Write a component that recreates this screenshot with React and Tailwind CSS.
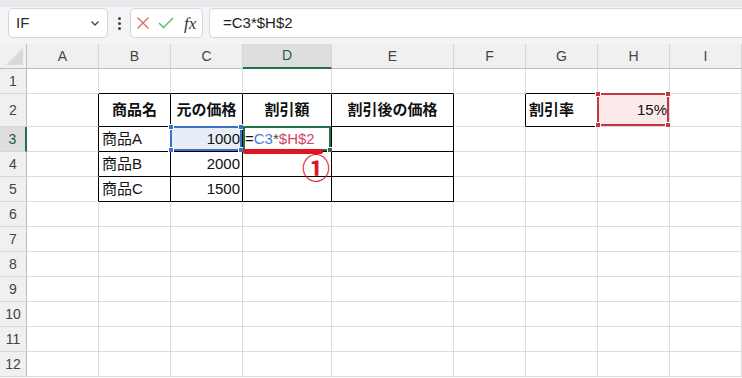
import React from "react";

const cols = ["A", "B", "C", "D", "E", "F", "G", "H", "I"];
const rows = [1, 2, 3, 4, 5, 6, 7, 8, 9, 10, 11, 12];

const cells = {
  B2: { text: "商品名", bold: true, align: "center" },
  C2: { text: "元の価格", bold: true, align: "center" },
  D2: { text: "割引額", bold: true, align: "center" },
  E2: { text: "割引後の価格", bold: true, align: "center" },
  G2: { text: "割引率", bold: true, align: "left" },
  H2: { text: "15%", align: "right" },
  B3: { text: "商品A", align: "left" },
  C3: { text: "1000", align: "right" },
  B4: { text: "商品B", align: "left" },
  C4: { text: "2000", align: "right" },
  B5: { text: "商品C", align: "left" },
  C5: { text: "1500", align: "right" },
};

const inTable = (c) => ["B", "C", "D", "E"].includes(c);

const rightBlack = (r, c) =>
  (r >= 2 && r <= 5 && ["A", "B", "C", "D", "E"].includes(c)) ||
  (r === 2 && (c === "F" || c === "G"));

const bottomBlack = (r, c) =>
  (r >= 1 && r <= 5 && inTable(c)) || (c === "G" && (r === 1 || r === 2));

const alignClass = (cell) => {
  if (!cell) return "";
  if (cell.align === "center") return "justify-center";
  if (cell.align === "right") return "justify-end pr-[2px]";
  return "justify-start pl-[3px]";
};

// selection handles sit on the corners of a selection frame
const Handle = ({ className }) => (
  <div className={`absolute w-[6px] h-[6px] border border-white ${className}`} />
);

const Toolbar = () => (
  <div className="h-[44px] bg-[#f3f4f6] flex flex-col">
    <div className="h-[7px] bg-[#e8eaed]" />
    <div className="flex items-center h-[30px] mt-[1px]">
      <div className="ml-[8px] w-[100px] h-[30px] bg-white border border-[#d6d6d6] rounded-[5px] flex items-center justify-between pl-[7px] pr-[6px]">
        <span className="text-[15px] text-[#2a2a2a]">IF</span>
        <svg width="12" height="12" viewBox="0 0 12 12">
          <path d="M2.5 4.5 L6 8 L9.5 4.5" fill="none" stroke="#444" strokeWidth="1.3" />
        </svg>
      </div>
      <div className="w-[22px] flex flex-col items-center gap-[2px]">
        <span className="w-[3px] h-[3px] rounded-full bg-[#444]" />
        <span className="w-[3px] h-[3px] rounded-full bg-[#444]" />
        <span className="w-[3px] h-[3px] rounded-full bg-[#444]" />
      </div>
      <div className="w-[73px] h-[30px] bg-white border border-[#d6d6d6] rounded-[5px] flex items-center pl-[5px] gap-[8px]">
        <svg width="14" height="14" viewBox="0 0 14 14">
          <path d="M1.5 1.5 L12.5 12.5 M12.5 1.5 L1.5 12.5" stroke="#e46a6a" strokeWidth="1.4" fill="none" />
        </svg>
        <svg width="16" height="14" viewBox="0 0 16 14">
          <path d="M1 7 L5.5 11.5 L15 2" stroke="#5cb85c" strokeWidth="1.4" fill="none" />
        </svg>
        <span className="text-[17px] italic text-[#333] leading-none ml-[2px]" style={{ fontFamily: '"Liberation Serif", serif' }}>
          fx
        </span>
      </div>
      <div className="ml-[6px] flex-1 h-[30px] bg-white border border-[#d6d6d6] border-r-0 rounded-l-[5px] flex items-center pl-[13px]">
        <span className="text-[15px] text-[#222]">=C3*$H$2</span>
      </div>
    </div>
  </div>
);

const Overlay = ({ id }) => {
  if (id === "C3") {
    return (
      <div className="absolute -left-[1px] -top-[1px] right-0 bottom-0 bg-[#e8eef8] border-2 border-[#3f6fc6]">
        <Handle className="bg-[#3f6fc6] -left-[4px] -top-[4px]" />
        <Handle className="bg-[#3f6fc6] -right-[4px] -top-[4px]" />
        <Handle className="bg-[#3f6fc6] -left-[4px] -bottom-[4px]" />
        <Handle className="bg-[#3f6fc6] -right-[4px] -bottom-[4px]" />
      </div>
    );
  }
  if (id === "H2") {
    return (
      <div className="absolute -left-[1px] -top-[1px] right-0 bottom-0 bg-[#fbeaea] border-2 border-[#c5373f]">
        <Handle className="bg-[#c5373f] -left-[4px] -top-[4px]" />
        <Handle className="bg-[#c5373f] -right-[4px] -top-[4px]" />
        <Handle className="bg-[#c5373f] -left-[4px] -bottom-[4px]" />
        <Handle className="bg-[#c5373f] -right-[4px] -bottom-[4px]" />
      </div>
    );
  }
  if (id === "D3") {
    return (
      <>
        <div className="absolute left-0 -top-[1px] right-0 bottom-0 border-2 border-[#217346]">
          <Handle className="bg-[#217346] -right-[4px] -bottom-[4px]" />
        </div>
        <div className="absolute left-0 -bottom-[3px] w-[80px] h-[5px] bg-[#e0161e] rounded-[2px] z-20" />
        <div className="absolute left-[59px] top-[29px] z-20 text-[28px] font-bold leading-none text-[#e0161e]">①</div>
      </>
    );
  }
  return null;
};

const Formula = () => (
  <span className="relative z-10 text-[15px] whitespace-nowrap pl-[2px]">
    <span className="text-[#111]">=</span>
    <span className="text-[#4a7bd0]">C3</span>
    <span className="text-[#444]">*</span>
    <span className="text-[#d2435e]">$H$2</span>
  </span>
);

export default function App() {
  return (
    <div
      className="w-[742px] h-[378px] overflow-hidden bg-white"
      style={{ fontFamily: '"Liberation Sans", "Noto Sans CJK JP", sans-serif' }}
    >
      <Toolbar />
      <div className="grid grid-cols-[27px_72px_72px_72px_89px_122px_72px_72px_72px_72px] grid-rows-[25px_25px_33px_repeat(10,25px)]">
        <div className="bg-[#f0f0f0] border-r border-b border-[#bdbdbd] flex items-end justify-end p-[3px]">
          <div className="w-0 h-0 border-l-[17px] border-l-transparent border-b-[17px] border-b-[#d9d9d9]" />
        </div>
        {cols.map((c) => (
          <div
            key={c}
            className={`flex items-center justify-center text-[14px] border-r border-r-[#d6d6d6] ${
              c === "D" ? "bg-[#dedede] border-b-2 border-b-[#217346] text-[#1d5c3a]" : "bg-[#f0f0f0] border-b border-b-[#bdbdbd] text-[#444]"
            }`}
          >
            {c}
          </div>
        ))}
        {rows.map((r) => (
          <React.Fragment key={r}>
            <div
              className={`flex items-center justify-center text-[14px] border-b border-b-[#d6d6d6] ${
                r === 3 ? "bg-[#dedede] border-r-2 border-r-[#217346] text-[#1d5c3a]" : "bg-[#f0f0f0] border-r border-r-[#bdbdbd] text-[#444]"
              }`}
            >
              {r}
            </div>
            {cols.map((c) => {
              const id = `${c}${r}`;
              const cell = cells[id];
              return (
                <div
                  key={id}
                  className={`relative flex items-center ${alignClass(cell)} border-r border-b ${
                    rightBlack(r, c) ? "border-r-black" : "border-r-[#dcdcdc]"
                  } ${bottomBlack(r, c) ? "border-b-black" : "border-b-[#dcdcdc]"}`}
                >
                  <Overlay id={id} />
                  {cell && (
                    <span className={`relative z-10 text-[15px] text-[#111] whitespace-nowrap ${cell.bold ? "font-bold" : ""}`}>
                      {cell.text}
                    </span>
                  )}
                  {id === "D3" && <Formula />}
                </div>
              );
            })}
          </React.Fragment>
        ))}
      </div>
    </div>
  );
}
